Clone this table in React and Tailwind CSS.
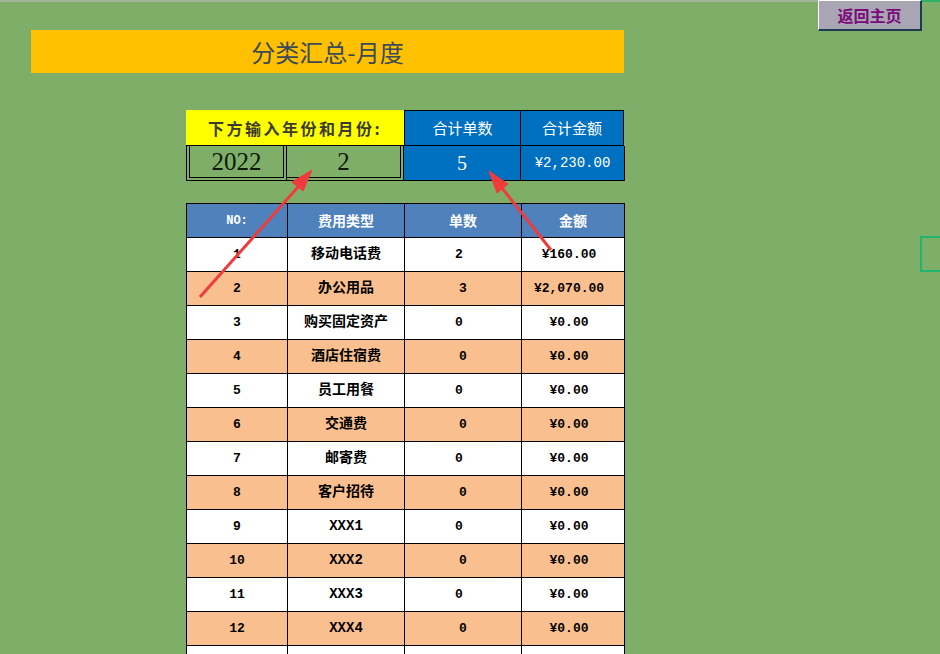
import React from "react";

const rows = [
  { no: 1, type: "移动电话费", count: 2, amount: "¥160.00" },
  { no: 2, type: "办公用品", count: 3, amount: "¥2,070.00" },
  { no: 3, type: "购买固定资产", count: 0, amount: "¥0.00" },
  { no: 4, type: "酒店住宿费", count: 0, amount: "¥0.00" },
  { no: 5, type: "员工用餐", count: 0, amount: "¥0.00" },
  { no: 6, type: "交通费", count: 0, amount: "¥0.00" },
  { no: 7, type: "邮寄费", count: 0, amount: "¥0.00" },
  { no: 8, type: "客户招待", count: 0, amount: "¥0.00" },
  { no: 9, type: "XXX1", count: 0, amount: "¥0.00" },
  { no: 10, type: "XXX2", count: 0, amount: "¥0.00" },
  { no: 11, type: "XXX3", count: 0, amount: "¥0.00" },
  { no: 12, type: "XXX4", count: 0, amount: "¥0.00" },
  { no: "", type: "", count: "", amount: "" },
];

const cjk = "font-['Noto_Sans_CJK_SC',sans-serif]";
const mono = "font-['Liberation_Mono','Noto_Sans_CJK_SC',monospace]";
const cell = "flex items-center justify-center border-r border-b border-black";

const Arrows = () => (
  <svg className="absolute left-0 top-0 pointer-events-none" width="940" height="654">
    <g fill="#ef3b3b" stroke="#ef3b3b">
      <line x1="200" y1="297" x2="298" y2="187" strokeWidth="3" />
      <polygon points="312,170 303,191 292,182" />
      <line x1="551" y1="250" x2="502" y2="188" strokeWidth="3" />
      <polygon points="489,171 508,184 497,193" />
    </g>
  </svg>
);

export default function App() {
  return (
    <div className="relative w-[940px] h-[654px] overflow-hidden bg-[#7fae68]">
      <div className="h-[2px] bg-[#a3b59c]" />
      <div className="pl-[31px] pt-[28px]">
        <div className={`w-[593px] h-[43px] bg-[#ffc000] flex items-center justify-center text-[24px] text-[#3a4a58] ${cjk}`}>
          分类汇总-月度
        </div>

        <div className="ml-[155px] mt-[37px] w-[439px]">
          {/* summary block */}
          <div className="flex">
            <div className="w-[218px] h-[36px] bg-[#ffff00] flex items-center justify-center border-b border-black">
              <span className={`text-[16px] font-bold tracking-[2.5px] text-[#3b3b2b] ${cjk}`}>下方输入年份和月份:</span>
            </div>
            <div className="flex border-t border-black">
              <div className={`${cell} w-[117px] h-[35px] bg-[#0070c0] border-l text-white text-[15px] ${cjk}`}>合计单数</div>
              <div className={`${cell} w-[103px] h-[35px] bg-[#0070c0] text-white text-[15px] ${cjk}`}>合计金额</div>
            </div>
          </div>
          <div className="flex">
            <div className="w-[101px] h-[35px] border-4 border-double border-black border-t-0 flex items-center justify-center text-[25px] text-[#0d1a0d] font-['Liberation_Serif',serif]">
              2022
            </div>
            <div className="w-[117px] h-[35px] border-4 border-double border-black border-t-0 border-l-0 flex items-center justify-center text-[25px] text-[#0d1a0d] font-['Liberation_Serif',serif]">
              2
            </div>
            <div className={`${cell} w-[117px] h-[35px] bg-[#0070c0] text-white text-[20px] font-['Liberation_Serif',serif]`}>5</div>
            <div className={`${cell} w-[104px] h-[35px] bg-[#0070c0] text-white text-[14px] ${mono}`}>¥2,230.00</div>
          </div>

          {/* detail table */}
          <div className="mt-[22px] border-l border-t border-black">
            <div className="flex bg-[#4f81bd] text-white font-bold">
              <div className={`${cell} w-[101px] h-[34px] text-[12px] ${mono}`}>NO:</div>
              <div className={`${cell} w-[117px] h-[34px] text-[14px] ${cjk}`}>费用类型</div>
              <div className={`${cell} w-[117px] h-[34px] text-[14px] ${cjk}`}>单数</div>
              <div className={`${cell} w-[103px] h-[34px] text-[14px] ${cjk}`}>金额</div>
            </div>
            {rows.map((r, i) => {
              const odd = i % 2 === 0;
              return (
                <div key={i} className={`flex font-bold text-black ${odd ? "bg-white" : "bg-[#fabf8f]"}`}>
                  <div className={`${cell} w-[101px] h-[34px] text-[13px] ${mono}`}>{r.no}</div>
                  <div className={`${cell} w-[117px] h-[34px] text-[14px] ${mono}`}>{r.type}</div>
                  <div className={`${cell} w-[117px] h-[34px] text-[13px] ${mono} ${odd ? "pr-2" : ""}`}>{r.count}</div>
                  <div className={`${cell} w-[103px] h-[34px] text-[13px] ${mono} pr-2`}>{r.amount}</div>
                </div>
              );
            })}
          </div>
        </div>
      </div>

      {/* return button */}
      <button
        type="button"
        className={`absolute left-[818px] top-0 w-[104px] h-[31px] bg-[#a9a6b3] border-l border-t border-l-white border-t-white border-r-2 border-b-2 border-r-[#1d3b50] border-b-[#1d3b50] text-[#7b0a7b] text-[16px] font-bold ${cjk}`}
      >
        返回主页
      </button>
      <div className="absolute left-[922px] top-0 w-[18px] h-[2px] bg-[#2fb36a]" />

      {/* selected cell */}
      <div className="absolute left-[920px] top-[236px] w-[40px] h-[36px] border-2 border-[#1fb56c]" />

      <Arrows />
    </div>
  );
}
